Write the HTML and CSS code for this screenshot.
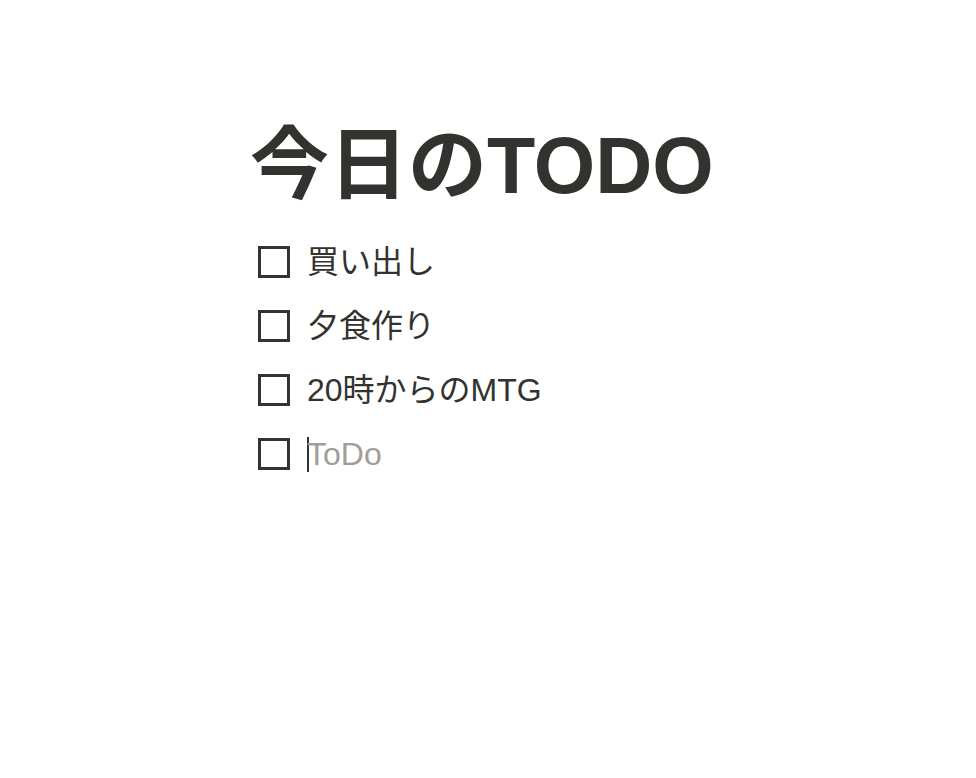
FILE: index.html
```html
<!DOCTYPE html>
<html lang="ja">
<head>
  <meta charset="UTF-8">
  <link rel="stylesheet" href="styles.css">
</head>
<body>
  <div class="page">
    <h1 class="title">今日のTODO</h1>
    <ul class="todo-list">
      <li class="todo-item">
        <span class="checkbox"></span>
        <span class="todo-text">買い出し</span>
      </li>
      <li class="todo-item">
        <span class="checkbox"></span>
        <span class="todo-text">夕食作り</span>
      </li>
      <li class="todo-item">
        <span class="checkbox"></span>
        <span class="todo-text">20時からのMTG</span>
      </li>
      <li class="todo-item">
        <span class="checkbox"></span>
        <span class="caret"></span>
        <input type="text" class="todo-input" placeholder="ToDo">
      </li>
    </ul>
  </div>
</body>
</html>
```

FILE: styles.css
```css
body {
  margin: 0;
  background: #ffffff;
  color: #33322f;
  font-family: "Liberation Sans", "Noto Sans CJK JP", sans-serif;
}

.page {
  width: 476px;
  margin: 0 auto;
  padding-top: 118px;
}

.title {
  margin: 0 0 16px 0;
  font-size: 79px;
  line-height: 96px;
  font-weight: 700;
  letter-spacing: 0;
}

.todo-list {
  list-style: none;
  margin: 0;
  padding: 0 0 0 8px;
}

.todo-item {
  display: flex;
  align-items: center;
  height: 64px;
}

.checkbox {
  width: 32px;
  height: 32px;
  border: 3px solid #33332f;
  box-sizing: border-box;
  margin-right: 17px;
  flex-shrink: 0;
}

.todo-text {
  font-size: 32px;
  line-height: 40px;
}

.caret {
  width: 2px;
  height: 35px;
  background: #33332f;
  margin-right: -2px;
}

.todo-input {
  border: none;
  outline: none;
  padding: 0;
  margin: 0;
  font-family: inherit;
  font-size: 32px;
  line-height: 40px;
  color: #33322f;
  background: transparent;
  width: 300px;
}

.todo-input::placeholder {
  color: #9e9e9a;
}
```
